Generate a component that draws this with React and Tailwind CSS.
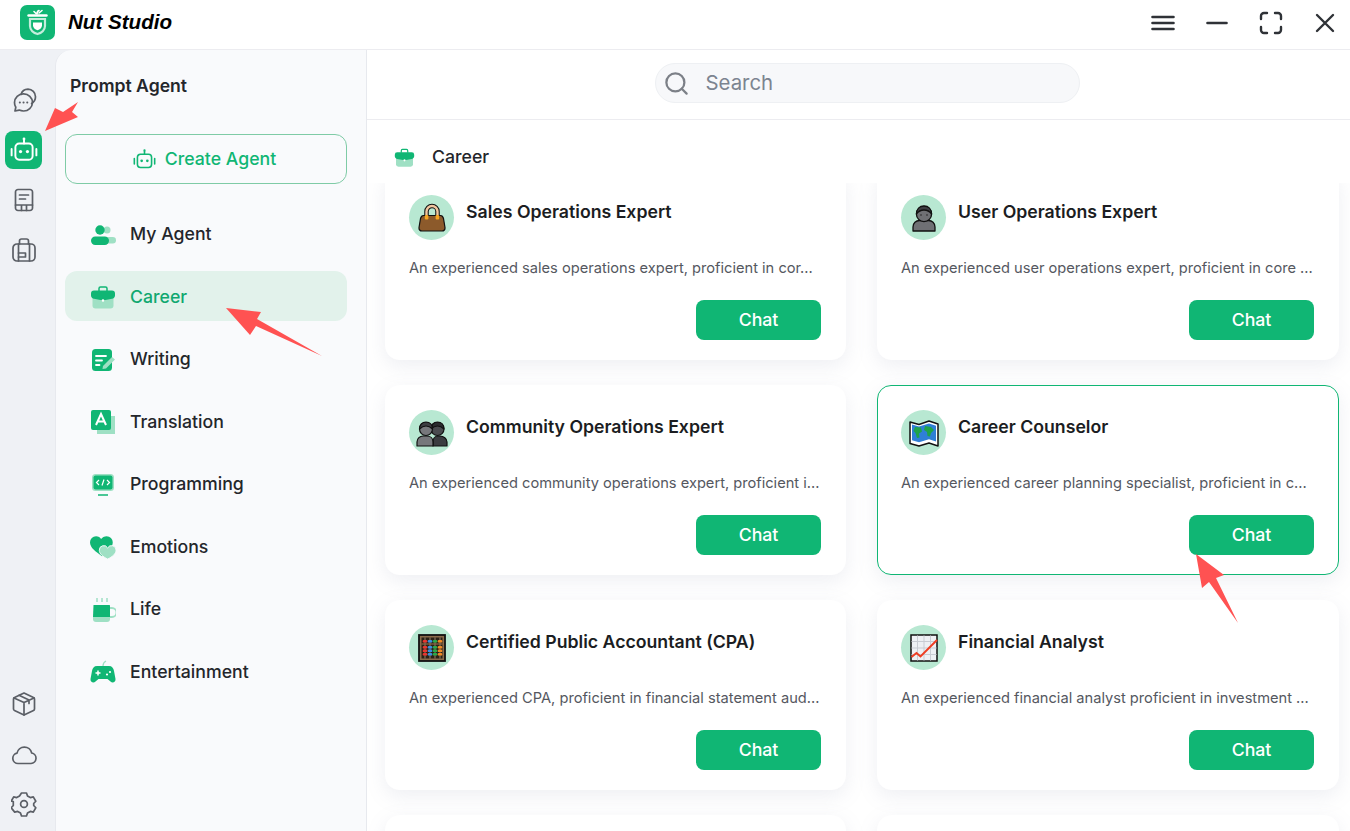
import { Search } from 'lucide-react';

const GREEN = '#10b674';
const MINT = '#9fe0c4';

// Rail icons, all on a 26px box
const RailStroke = ({ children }) => (
  <svg width="26" height="26" viewBox="0 0 26 26" fill="none" stroke="#5b5f66" strokeWidth="1.7" strokeLinecap="round" strokeLinejoin="round">
    {children}
  </svg>
);

const ChatIcon = () => (
  <RailStroke>
    <path d="M12.5 24c-1.6 0-3-.3-4.3-.9l-4.2.9.8-3.7A9 9 0 0 1 3.500 15.500a8.800 8.800 0 0 1 9-8.700 8.800 8.800 0 0 1 9 8.700 8.800 8.800 0 0 1-9 8.500z" />
    <path d="M10 7.500a7.400 7.400 0 0 1 7-5.300 7.600 7.600 0 0 1 7.500 7.600c0 3-1.600 5.400-3.900 6.700" />
    <path d="M8.800 15.500h.1M12.500 15.500h.1M16.200 15.500h.1" strokeWidth="2" />
  </RailStroke>
);

const BookIcon = () => (
  <RailStroke>
    <path d="M4.500 21V5a2.500 2.500 0 0 1 2.500-2.500h12A2.500 2.500 0 0 1 21.500 5v16a2.500 2.500 0 0 1-2.500 2.500H7A2.500 2.500 0 0 1 4.500 21z" />
    <path d="M8.500 8h9M8.500 12h6M4.500 18h17M10.500 18v5.500M15.500 18v5.500" />
  </RailStroke>
);

const CaseIcon = () => (
  <RailStroke>
    <rect x="2" y="7" width="22" height="17" rx="4" />
    <path d="M8.500 7V4a2 2 0 0 1 2-2h5a2 2 0 0 1 2 2v3M7.500 7v17M18.500 7v17" />
    <path d="M7.500 16h7v4h-7" />
  </RailStroke>
);

const BoxIcon = () => (
  <RailStroke>
    <path d="M13 2l9.500 4.500a1.500 1.500 0 0 1 1 1.400v10.200a1.500 1.500 0 0 1-1 1.400L13 24l-9.500-4.500a1.500 1.500 0 0 1-1-1.400V7.900a1.500 1.500 0 0 1 1-1.400z" />
    <path d="M3 7l10 4.500L23 7M13 11.500V24M8 4.300l10 4.700v3.500" />
  </RailStroke>
);

const CloudIcon = () => (
  <RailStroke>
    <path d="M7 22.500a5.200 5.200 0 0 1-1-10.300 7.500 7.500 0 0 1 14.700-.2 5.300 5.300 0 0 1-.7 10.500z" />
  </RailStroke>
);

const GearIcon = () => (
  <RailStroke>
    <path d="M10.500 2.500h5l1 3 2.800 1.600 3-.7 2.500 4.300-2.100 2.300v2l2.100 2.300-2.500 4.300-3-.7-2.800 1.600-1 3h-5l-1-3-2.800-1.600-3 .7L.200 17.300l2.100-2.300v-4L.200 10.700l2.500-4.300 3 .7 2.800-1.600z" transform="translate(0 -.5)" />
    <circle cx="13" cy="13" r="3.400" />
  </RailStroke>
);

const BotIcon = ({ size = 26, color = '#fff' }) => (
  <svg width={size} height={size} viewBox="0 0 26 26" fill="none" stroke={color} strokeWidth="1.800" strokeLinecap="round" strokeLinejoin="round">
    <rect x="5" y="7" width="16" height="15" rx="3.500" />
    <path d="M13 7V4" />
    <circle cx="13" cy="2.800" r="1.300" fill={color} stroke="none" />
    <path d="M1.500 12v6M24.500 12v6" />
    <circle cx="9.800" cy="14.500" r="1.500" fill={color} stroke="none" />
    <circle cx="16.200" cy="14.500" r="1.500" fill={color} stroke="none" />
  </svg>
);

const AgentsIcon = () => (
  <svg width="26" height="26" viewBox="0 0 26 26">
    <circle cx="17" cy="8" r="3.500" fill={MINT} />
    <rect x="10" y="15" width="16" height="6.500" rx="3.200" fill={MINT} />
    <circle cx="10" cy="8" r="4.700" fill={GREEN} />
    <rect x="1" y="14.500" width="18" height="8.500" rx="4.200" fill={GREEN} />
  </svg>
);

const CareerIcon = ({ size = 26 }) => (
  <svg width={size} height={size} viewBox="0 0 26 26">
    <path d="M9 7V4.500A1.500 1.500 0 0 1 10.500 3h5A1.500 1.500 0 0 1 17 4.500V7" fill="none" stroke={GREEN} strokeWidth="1.500" />
    <path d="M2.500 14h21v7.500a3 3 0 0 1-3 3h-15a3 3 0 0 1-3-3z" fill={MINT} />
    <path d="M4 6.500h18a3 3 0 0 1 3 3v2c0 2-1.500 3-3 3.300l-9 1.700-9-1.700c-1.500-.3-3-1.300-3-3.300v-2a3 3 0 0 1 3-3z" fill={GREEN} />
    <circle cx="13" cy="16.500" r="1.300" fill="#fff" />
  </svg>
);

const WritingIcon = () => (
  <svg width="26" height="26" viewBox="0 0 26 26">
    <rect x="2" y="2" width="20" height="22" rx="3.500" fill={GREEN} />
    <path d="M6 9h10M6 13.500h6M6 18h3.500" stroke="#fff" strokeWidth="1.800" strokeLinecap="round" />
    <path d="M13 19l9-9 3 2.500-9 9-3.500.5z" fill={MINT} />
  </svg>
);

const TranslateIcon = () => (
  <svg width="26" height="26" viewBox="0 0 26 26">
    <path d="M19 7h6v18H7v-5h12z" fill={MINT} />
    <rect x="1" y="1" width="20" height="20" rx="2" fill={GREEN} />
    <path d="M6 16l5-11 5 11M7.700 12.500h6.600" fill="none" stroke="#fff" strokeWidth="2" />
  </svg>
);

const CodeIcon = () => (
  <svg width="26" height="26" viewBox="0 0 26 26">
    <rect x="2" y="2" width="22" height="17" rx="3.500" fill={MINT} />
    <rect x="3.500" y="3.500" width="19" height="14" rx="2" fill={GREEN} />
    <path d="M9 8l-2.500 2.500L9 13M17 8l2.500 2.500L17 13M14 7.500l-2 6" fill="none" stroke="#fff" strokeWidth="1.200" />
    <path d="M8 23h10" stroke={GREEN} strokeWidth="1.500" />
  </svg>
);

const HeartsIcon = () => (
  <svg width="28" height="26" viewBox="0 0 28 26">
    <path d="M13 23C6 18 0 14 0 8a6.500 6.500 0 0 1 6.500-6.500c2.500 0 4.500 1.300 5.500 3 1-1.700 3.500-3 6-3A6.500 6.500 0 0 1 24.500 8c0 6-5.500 10-11.500 15z" fill={GREEN} />
    <path d="M19 26c-5-2.500-9-5.500-9-9.500a4.800 4.800 0 0 1 9-2.500 4.800 4.800 0 0 1 9 2.500c0 4-4 7-9 9.500z" fill={MINT} stroke="#f9fafc" strokeWidth="1" />
  </svg>
);

const CupIcon = () => (
  <svg width="26" height="26" viewBox="0 0 26 26">
    <path d="M7 1v4M12 1v4M17 1v4" stroke={MINT} strokeWidth="1.500" />
    <path d="M20 11h2a3.500 3.500 0 0 1 0 9h-2" fill="none" stroke={MINT} strokeWidth="1.800" />
    <path d="M3 19h17v3a3 3 0 0 1-3 3H6a3 3 0 0 1-3-3z" fill={MINT} />
    <path d="M3.500 8h16a.500.500 0 0 1 .500.500V20H3z" fill={GREEN} />
  </svg>
);

const GameIcon = () => (
  <svg width="26" height="26" viewBox="0 0 26 26">
    <path d="M13 7c0-3 1-4 3-5" fill="none" stroke={MINT} strokeWidth="1.300" />
    <path d="M7 7h12c3 0 4.500 2 5 5l1.500 8c.4 3-3 4.500-5 2.500L17.500 20h-9l-3 2.500c-2 2-5.400.5-5-2.500L2 12c.500-3 2-5 5-5z" fill={GREEN} />
    <path d="M5.500 14h5M8 11.500v5" stroke="#fff" strokeWidth="1.500" />
    <circle cx="17" cy="15.500" r="1.100" fill="#fff" />
    <circle cx="20" cy="13" r="1.100" fill="#fff" />
  </svg>
);

// Emoji portraits in the mint circles
const BagEmoji = () => (
  <svg width="30" height="30" viewBox="0 0 30 30" stroke="#111" strokeWidth="1.200" strokeLinejoin="round">
    <path d="M9.500 13V8.500a5.500 5.500 0 0 1 11 0V13" fill="none" stroke="#111" strokeWidth="4.500" />
    <path d="M9.500 13V8.500a5.500 5.500 0 0 1 11 0V13" fill="none" stroke="#f0c6a0" strokeWidth="2.400" />
    <path d="M6.500 12.500h17c2 0 2.500 1 3 3l1.500 9c.300 2-1 3.500-3 3.500H5c-2 0-3.300-1.500-3-3.500L3.500 15.500c.500-2 1-3 3-3z" fill="#8c5a2b" />
    <rect x="7.800" y="12" width="3.600" height="4.500" rx="1" fill="#f5a623" stroke="none" />
    <rect x="18.600" y="12" width="3.600" height="4.500" rx="1" fill="#f5a623" stroke="none" />
  </svg>
);

const PersonEmoji = () => (
  <svg width="30" height="30" viewBox="0 0 30 30" stroke="#111" strokeWidth="1.300" strokeLinejoin="round">
    <path d="M4 28v-4c0-4 3-6.500 6.500-6.500h9c3.500 0 6.500 2.500 6.500 6.500v4z" fill="#6f7074" />
    <circle cx="15" cy="11" r="7.600" fill="#6f7074" />
    <path d="M7.500 11c0-5 3-8 7.500-8s7.500 3 7.500 8c-2-3-4-4-7.500-4s-5.500 1-7.500 4z" fill="#3d3e42" />
    <circle cx="12" cy="12" r=".7" fill="#111" stroke="none" />
    <circle cx="18" cy="12" r=".7" fill="#111" stroke="none" />
  </svg>
);

const PeopleEmoji = () => (
  <svg width="32" height="30" viewBox="0 0 32 30" stroke="#111" strokeWidth="1.200" strokeLinejoin="round">
    <path d="M17 28v-4c0-3.500 2-6 5-6h2c3.500 0 7 2.500 7 6v4z" fill="#3b3c40" />
    <circle cx="21.500" cy="11" r="6.500" fill="#4a4b4f" />
    <path d="M15 11c0-4 2.500-7 6.500-7s6.500 3 6.500 7c-2-2-4-3-6.500-3s-4.500 1-6.500 3z" fill="#2a2b2e" />
    <path d="M1 28v-4c0-3.500 3-6 6-6h4c3.500 0 6 2.500 6 6v4z" fill="#77787c" />
    <circle cx="10" cy="11" r="6.500" fill="#77787c" />
    <path d="M3.500 11c0-4 2.500-7 6.500-7s6.500 3 6.500 7c-2-2-4-3-6.500-3s-4.500 1-6.500 3z" fill="#3d3e42" />
  </svg>
);

const MapEmoji = () => (
  <svg width="32" height="30" viewBox="0 0 32 30">
    <path d="M2 4l9 2.500L21 3l9 3v22l-9-3-10 3-9-2.500z" fill="#fff" stroke="#111" strokeWidth="1.500" strokeLinejoin="round" />
    <path d="M4 6.500l7 2 10-3 7 2.300v15.700l-7-2.300-10 3-7-2z" fill="#2f7fd6" />
    <path d="M7 9l6 .5 1 4-3 2 .5 4-2.500.5-1.500-5-2-2zM17 8l6 1 3 3-3 3-1 3.500-2.500-.5-.5-4-3-2z" fill="#1fa34a" />
  </svg>
);

const AbacusEmoji = () => {
  const colors = ['#e8352e', '#3a8fe0', '#2aa84a', '#f08a24'];
  return (
    <svg width="30" height="30" viewBox="0 0 30 30">
      <rect x="2" y="2" width="26" height="26" fill="#8a6a4a" stroke="#111" strokeWidth="1.800" />
      <rect x="4.500" y="4.500" width="21" height="21" fill="#2b2116" />
      <path d="M8 4.500v21M13 4.500v21M18 4.500v21M23 4.500v21" stroke="#b39a7c" strokeWidth=".800" />
      <path d="M4.500 11h21" stroke="#8a6a4a" strokeWidth="1.200" />
      {colors.map((c, i) => (
        <g key={i} fill={c}>
          <rect x={5.700 + i * 5} y="7" width="4.600" height="2.600" rx="1.200" />
          <rect x={5.700 + i * 5} y="13" width="4.600" height="2.600" rx="1.200" />
          <rect x={5.700 + i * 5} y="16.500" width="4.600" height="2.600" rx="1.200" />
          <rect x={5.700 + i * 5} y="20" width="4.600" height="2.600" rx="1.200" />
        </g>
      ))}
    </svg>
  );
};

const ChartEmoji = () => (
  <svg width="30" height="30" viewBox="0 0 30 30">
    <rect x="2" y="2" width="26" height="26" fill="#eef0f4" stroke="#111" strokeWidth="1.500" />
    <path d="M8.500 2.500v25M15 2.500v25M21.500 2.500v25M2.500 8.500h25M2.500 15h25M2.500 21.500h25" stroke="#c9ccd3" strokeWidth="1" />
    <path d="M2.500 24l5-4 4 3.500L28 7" fill="none" stroke="#ef3e23" strokeWidth="2" />
  </svg>
);

const navItems = [
  { label: 'My Agent', icon: <AgentsIcon /> },
  { label: 'Career', icon: <CareerIcon />, active: true },
  { label: 'Writing', icon: <WritingIcon /> },
  { label: 'Translation', icon: <TranslateIcon /> },
  { label: 'Programming', icon: <CodeIcon /> },
  { label: 'Emotions', icon: <HeartsIcon /> },
  { label: 'Life', icon: <CupIcon /> },
  { label: 'Entertainment', icon: <GameIcon /> },
];

const cards = [
  { title: 'Sales Operations Expert', desc: 'An experienced sales operations expert, proficient in cor...', emoji: <BagEmoji /> },
  { title: 'User Operations Expert', desc: 'An experienced user operations expert, proficient in core ...', emoji: <PersonEmoji /> },
  { title: 'Community Operations Expert', desc: 'An experienced community operations expert, proficient i...', emoji: <PeopleEmoji /> },
  { title: 'Career Counselor', desc: 'An experienced career planning specialist, proficient in c...', emoji: <MapEmoji />, hot: true },
  { title: 'Certified Public Accountant (CPA)', desc: 'An experienced CPA, proficient in financial statement aud...', emoji: <AbacusEmoji /> },
  { title: 'Financial Analyst', desc: 'An experienced financial analyst proficient in investment ...', emoji: <ChartEmoji /> },
  {},
  {},
];

function AgentCard({ card }) {
  // the last row is scrolled almost out of view, only its top edge shows
  if (!card.title) return <div className="h-[190px] rounded-[14px] border border-white bg-white shadow-[0_6px_20px_rgba(120,135,160,0.13)]" />;
  return (
    <div className={`h-[190px] rounded-[14px] border bg-white pt-6 pr-6 pl-[23px] shadow-[0_6px_20px_rgba(120,135,160,0.13)] ${card.hot ? 'border-[#10b674]' : 'border-white'}`}>
      <div className="flex items-start gap-3">
        <div className="flex h-[45px] w-[45px] shrink-0 items-center justify-center rounded-full bg-[#b8e8d2]">{card.emoji}</div>
        <div className="pt-[5px] text-[17.7px] leading-6 font-semibold whitespace-nowrap text-[#1b1d22]">{card.title}</div>
      </div>
      <div className="mt-[18px] h-5 text-[14.65px] leading-5 whitespace-nowrap text-[#55585f]">{card.desc}</div>
      <div className="mt-[22px] flex justify-end">
        <button className="h-10 w-[125px] rounded-lg bg-[#10b674] text-[17.7px] font-medium text-white">Chat</button>
      </div>
    </div>
  );
}

export default function App() {
  return (
    <div className="relative flex h-[831px] w-[1350px] flex-col overflow-hidden bg-white font-['Inter',sans-serif]">
      {/* Title bar */}
      <header className="flex h-[50px] shrink-0 items-center border-b border-[#ececf0] pb-1 pl-5">
        <svg width="35" height="35" viewBox="0 0 35 35">
          <rect width="35" height="35" rx="7" fill={GREEN} />
          <path d="M8.500 10.500h18" stroke="#fff" strokeWidth="2.400" strokeLinecap="round" />
          <path d="M17 9c0-2 .5-3 2-3.500M14 6.500l2 2M22 5.500l-3 2.500" stroke="#fff" strokeWidth="1.600" strokeLinecap="round" fill="none" />
          <path d="M10 14h15v7c0 4-3.500 7-7.500 8-4-1-7.500-4-7.500-8z" fill="none" stroke="#fff" strokeOpacity=".75" strokeWidth="2.200" />
          <path d="M13 17.500h9v3c0 2.200-2 4-4.500 4.800-2.500-.8-4.500-2.600-4.500-4.800z" fill="#fff" />
        </svg>
        <span className="ml-[13px] font-['Liberation_Sans',sans-serif] text-[20.6px] font-bold text-black italic">Nut Studio</span>
        <div className="mr-[15px] ml-auto flex items-center">
          <svg width="24" height="16" viewBox="0 0 24 16" stroke="#2f3237" strokeWidth="2.600" strokeLinecap="round">
            <path d="M1.500 2h21M1.500 8h21M1.500 14h21" />
          </svg>
          <svg className="ml-[31px]" width="22" height="4" viewBox="0 0 22 4" stroke="#2f3237" strokeWidth="2.600" strokeLinecap="round">
            <path d="M1.500 2h19" />
          </svg>
          <svg className="ml-[31px]" width="24" height="24" viewBox="0 0 24 24" fill="none" stroke="#2f3237" strokeWidth="2.400" strokeLinecap="round">
            <path d="M8 2H5a3 3 0 0 0-3 3v3M16 2h3a3 3 0 0 1 3 3v3M22 16v3a3 3 0 0 1-3 3h-3M8 22H5a3 3 0 0 1-3-3v-3" />
          </svg>
          <svg className="ml-[32px]" width="20" height="20" viewBox="0 0 20 20" stroke="#2f3237" strokeWidth="2.400" strokeLinecap="round">
            <path d="M2 2l16 16M18 2L2 18" />
          </svg>
        </div>
      </header>

      <div className="flex min-h-0 flex-1 bg-[#eff1f5]">
        {/* Icon rail */}
        <nav className="flex w-[55px] shrink-0 flex-col items-center pr-2 pb-[14px]">
          <div className="mt-[38px] flex h-6 items-center"><ChatIcon /></div>
          <div className="mt-[19px] flex h-[38px] w-[37px] items-center justify-center rounded-lg bg-[#10b674]"><BotIcon size={28} /></div>
          <div className="mt-[18px] flex h-[26px] items-center"><BookIcon /></div>
          <div className="mt-[24px] flex h-[26px] items-center"><CaseIcon /></div>
          <div className="mt-auto flex flex-col gap-6">
            <BoxIcon />
            <CloudIcon />
            <GearIcon />
          </div>
        </nav>

        {/* Agent categories */}
        <aside className="w-[312px] shrink-0 rounded-tl-[16px] border-r border-l border-[#e7e9ee] bg-[#f9fafc] pl-[9px]">
          <h1 className="mt-[24px] ml-[5px] text-[17.6px] leading-6 font-semibold text-[#24262b]">Prompt Agent</h1>
          <button className="mt-[36px] flex h-[50px] w-[282px] items-center justify-center gap-[9px] rounded-xl border border-[#7fcba6] pr-[3px] text-[17.7px] font-medium text-[#10b674]">
            <BotIcon size={23} color="#10b674" />
            Create Agent
          </button>
          <ul className="mt-[24px] flex w-[282px] flex-col gap-[12.5px]">
            {navItems.map((item) => (
              <li key={item.label} className={`flex h-[50px] items-center gap-[14px] rounded-xl pt-[3px] pl-[25px] text-[17.7px] font-medium ${item.active ? 'bg-[#e2f2eb] text-[#10a870]' : 'text-[#24262b]'}`}>
                <span className="flex w-[26px] justify-center">{item.icon}</span>
                {item.label}
              </li>
            ))}
          </ul>
        </aside>

        {/* Main panel */}
        <main className="flex min-w-0 flex-1 flex-col bg-white">
          <div className="flex h-[70px] shrink-0 items-start justify-center border-b border-[#ececf0] pt-[13px] pl-[17px]">
            <div className="flex h-10 w-[425px] items-center rounded-full border border-[#eef0f3] bg-[#f7f8fa] pl-[7px]">
              <Search size={27} color="#7c8087" strokeWidth={2} />
              <span className="ml-[16px] text-[20.4px] text-[#7c8490]">Search</span>
            </div>
          </div>
          <div className="flex h-[63px] shrink-0 items-center gap-[17px] pt-[12px] pl-[27px]">
            <CareerIcon size={21} />
            <span className="text-[17.7px] font-medium text-[#24262b]">Career</span>
          </div>
          <div className="min-h-0 flex-1 overflow-hidden pl-[18px]">
            <div className="mt-[-13px] grid grid-cols-[461px_462px] gap-x-[31px] gap-y-[25px]">
              {cards.map((card, i) => <AgentCard key={i} card={card} />)}
            </div>
          </div>
        </main>
      </div>

      {/* Red annotation arrows on top of the screenshot */}
      <svg className="pointer-events-none absolute inset-0" width="1350" height="831" viewBox="0 0 1350 831" fill="#ff5252">
        <polygon points="45,131 55,108 63,112 78,102 72,112 78,117" />
        <polygon points="226,308 261,312 257,319 322,356 256,326 250,335" />
        <polygon points="1196,554 1224,575 1216,578 1238,623 1209,582 1202,588" />
      </svg>
    </div>
  );
}
